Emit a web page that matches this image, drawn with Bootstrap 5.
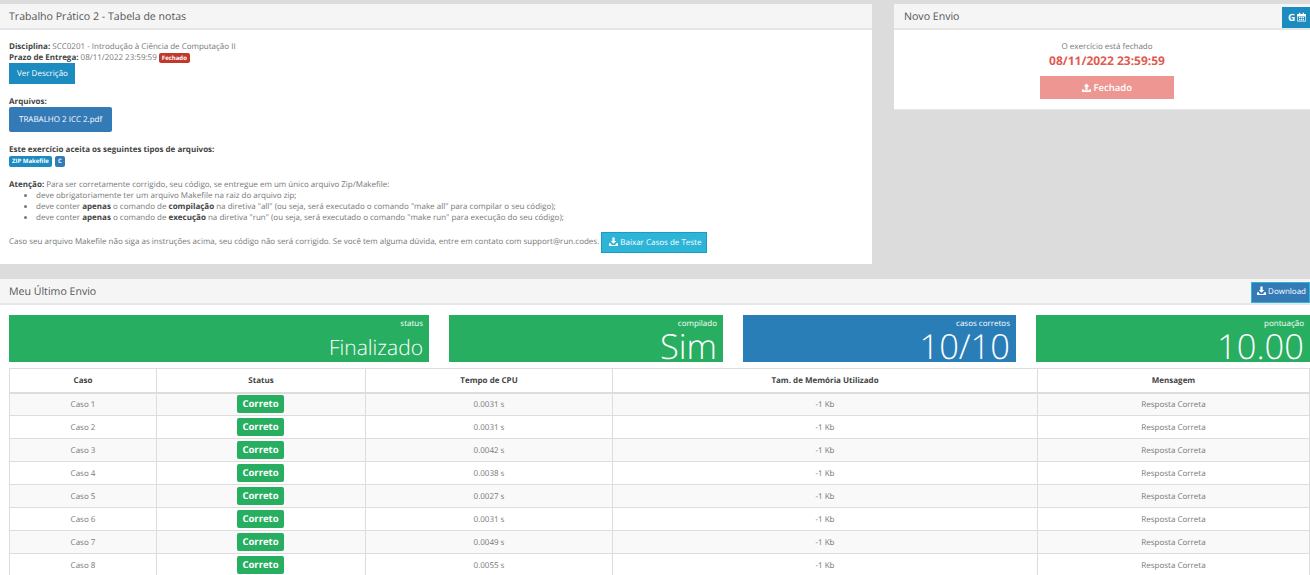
<!DOCTYPE html>
<html lang="pt-BR">
  <head>
    <meta charset="UTF-8" />
    <title>Trabalho Prático 2 - Tabela de notas</title>
    <link href="https://cdn.jsdelivr.net/npm/bootstrap@5.3.3/dist/css/bootstrap.min.css" rel="stylesheet" />
    <style>
      html, body { height: 575px; overflow: hidden; }
      body {
        background: #dcdcdc;
        font-family: "Open Sans", "Liberation Sans", sans-serif;
        font-size: 8px;
        line-height: 11.4px;
        color: #777;
        padding-top: 4px;
        text-rendering: geometricPrecision;
      }
      b, strong { color: #444; font-weight: 700; }
      .top-area { display: grid; grid-template-columns: 872px 416px; column-gap: 22px; margin-bottom: 15px; height: 260px; }
      .box { background: #fff; }
      .box-side { height: 106px; border-bottom: 1px solid #e6e6e6; }
      .box-head {
        background: #f5f5f5;
        border-bottom: 2px solid #e6e6e6;
        height: 26px;
        padding: 1px 9px 0;
        font-size: 10.6px;
        line-height: 24px;
        color: #555;
        position: relative;
      }
      .box-side .box-head { padding-left: 10px; }
      .box-body { padding: 11px 9px 0; }
      .box-side .box-body { padding-left: 19px; }
      .btn-flat {
        display: inline-block;
        color: #fff;
        border: 0;
        border-radius: 0;
        font-size: 8px;
        line-height: 12px;
        white-space: nowrap;
      }
      .btn-desc { background: #1b8bc0; padding: 5px 8px 4px; height: 21px; display: block; width: 66px; margin-top: -1px; }
      .btn-file { background: #337ab7; padding: 7px 10px; height: 25px; width: 103px; border-radius: 2px; display: block; margin-top: -1px; }
      .btn-tests { background: #2db5d8; border: 1px solid #1b9cc0; padding: 4px 7px; height: 21px; width: 106px; }
      .btn-cal { position: absolute; right: 0; top: 3px; background: #1b8bc0; height: 21px; width: 28px; padding: 4px 0 0 6px; font-weight: 700; font-size: 10px; }
      .btn-dl { position: absolute; right: 0; top: 3px; background: #337ab7; border: 1px solid #2db5d8; height: 21px; width: 59px; padding: 3px 0 0 5px; }
      .tag-red { background: #c0392b; color: #fff; font-size: 6px; font-weight: 700; padding: 1px 3px; border-radius: 2px; line-height: 8px; display: inline-block; }
      .tag-blue { background: #1b8bc0; color: #fff; font-size: 6px; font-weight: 700; padding: 2px 3px; border-radius: 2px; line-height: 7px; height: 11px; display: inline-block; }
      .tag-dark { background: #337ab7; width: 10px; }
      .type-tags { display: flex; gap: 3px; }
      .gap-a { margin-top: 12.6px; }
      .gap-b { margin-top: 12.4px; }
      .gap-c { margin-top: 8.4px; }
      .gap-d { margin-top: 12.6px; }
      .rules { margin: 0.6px 0 0; padding-left: 27px; line-height: 10.7px; }
      .close-date { color: #e05a50; font-size: 12px; font-weight: 700; line-height: 17px; }
      .btn-closed { background: #ee9792; width: 134px; height: 23px; font-weight: 600; font-size: 9.5px; padding-top: 6px; display: block; margin: 7px auto 0; }
      .stats { display: grid; grid-template-columns: 420px 274px 273px 274px; column-gap: 20px; padding: 10px 0 6px 9px; }
      .stat { height: 47px; color: #fff; text-align: right; padding: 4px 6px 0 0; }
      .stat-green { background: #27ae60; }
      .stat-blue { background: #2a7eb8; }
      .stat-label { font-size: 8px; line-height: 10px; }
      .stat-value { font-weight: 300; line-height: 33px; }
      .stat-sm { font-size: 21px; margin-top: 3px; }
      .stat-lg { font-size: 34.5px; margin-top: 1px; }
      .cases { margin: 0 0 0 9px; width: 1300px; table-layout: fixed; border-collapse: collapse; }
      .cases td, .cases th { border: 1px solid #ddd; text-align: center; padding: 1px 0 0; height: 23px; font-size: 8px; color: #777; vertical-align: middle; background: #fff; }
      .cases th { color: #444; font-weight: 700; border-bottom: 2px solid #ddd; height: 24px; padding-top: 0; }
      .cases tbody tr:nth-child(odd) td { background: #f9f9f9; }
      .ok-tag { display: inline-block; background: #27ae60; color: #fff; font-size: 9.5px; font-weight: 700; line-height: 18px; width: 47px; border-radius: 2px; vertical-align: middle; margin: -1px 1px 0 0; }
      .ico { width: 9px; height: 9px; vertical-align: -1px; fill: #fff; }
      .ico-cal { width: 11px; height: 10px; margin-left: 1px; }
      .last-line { display: flex; align-items: center; gap: 2px; }
      .last-text { margin-bottom: 2px; }
    </style>
  </head>
  <body>
    <div class="top-area">
      <div class="box">
        <div class="box-head">Trabalho Prático 2 - Tabela de notas</div>
        <div class="box-body">
          <div><b>Disciplina:</b> SCC0201 - Introdução à Ciência de Computação II</div>
          <div><b>Prazo de Entrega:</b> 08/11/2022 23:59:59 <span class="tag-red">Fechado</span></div>
          <span class="btn-flat btn-desc">Ver Descrição</span>
          <div class="gap-a"><b>Arquivos:</b></div>
          <span class="btn-flat btn-file">TRABALHO 2 ICC 2.pdf</span>
          <div class="gap-d"><b>Este exercício aceita os seguintes tipos de arquivos:</b></div>
          <div class="type-tags"><span class="tag-blue">ZIP Makefile</span><span class="tag-blue tag-dark">C</span></div>
          <div class="gap-b"><b>Atenção:</b> Para ser corretamente corrigido, seu código, se entregue em um único arquivo Zip/Makefile:</div>
          <ul class="rules">
            <li>deve obrigatoriamente ter um arquivo Makefile na raiz do arquivo zip;</li>
            <li>deve conter <b>apenas</b> o comando de <b>compilação</b> na diretiva "all" (ou seja, será executado o comando "make all" para compilar o seu código);</li>
            <li>deve conter <b>apenas</b> o comando de <b>execução</b> na diretiva "run" (ou seja, será executado o comando "make run" para execução do seu código);</li>
          </ul>
          <div class="last-line gap-c">
            <span class="last-text">Caso seu arquivo Makefile não siga as instruções acima, seu código não será corrigido. Se você tem alguma dúvida, entre em contato com support@run.codes.</span>
            <span class="btn-flat btn-tests"><svg class="ico" viewBox="0 0 16 16"><path d="M6 1h4v6h3L8 12 3 7h3zM0 11h3l2 3h6l2-3h3v5H0z"/></svg> Baixar Casos de Teste</span>
          </div>
        </div>
      </div>
      <div class="box box-side">
        <div class="box-head">Novo Envio
          <span class="btn-flat btn-cal">G<svg class="ico ico-cal" viewBox="0 0 16 16"><path d="M1 3h3V1h2v2h4V1h2v2h3v12H1zm1 4v7h12V7zm2 1h2v2H4zm3 0h2v2H7zm3 0h2v2h-2zm-6 3h2v2H4zm3 0h2v2H7zm3 0h2v2h-2z" fill-rule="evenodd"/></svg></span>
        </div>
        <div class="box-body text-center">
          <div>O exercício está fechado</div>
          <div class="close-date">08/11/2022 23:59:59</div>
          <span class="btn-flat btn-closed"><svg class="ico" viewBox="0 0 16 16"><path d="M6 12h4V6h3L8 1 3 6h3zM0 11h3v2h10v-2h3v5H0z"/></svg> Fechado</span>
        </div>
      </div>
    </div>
    <div class="box">
      <div class="box-head">Meu Último Envio
        <span class="btn-flat btn-dl"><svg class="ico" viewBox="0 0 16 16"><path d="M6 1h4v6h3L8 12 3 7h3zM0 11h3l2 3h6l2-3h3v5H0z"/></svg> Download</span>
      </div>
      <div class="stats">
        <div class="stat stat-green"><div class="stat-label">status</div><div class="stat-value stat-sm">Finalizado</div></div>
        <div class="stat stat-green"><div class="stat-label">compilado</div><div class="stat-value stat-lg">Sim</div></div>
        <div class="stat stat-blue"><div class="stat-label">casos corretos</div><div class="stat-value stat-lg">10/10</div></div>
        <div class="stat stat-green"><div class="stat-label">pontuação</div><div class="stat-value stat-lg">10.00</div></div>
      </div>
      <table class="cases">
        <colgroup><col style="width:147px"><col style="width:209px"><col style="width:247px"><col style="width:425px"><col style="width:272px"></colgroup>
        <thead><tr><th>Caso</th><th>Status</th><th>Tempo de CPU</th><th>Tam. de Memória Utilizado</th><th>Mensagem</th></tr></thead>
        <tbody id="caseRows"></tbody>
      </table>
    </div>
    <script>
      const times = ["0.0031", "0.0031", "0.0042", "0.0038", "0.0027", "0.0031", "0.0049", "0.0055"];
      document.getElementById("caseRows").innerHTML = times.map((t, i) => `
        <tr><td>Caso ${i + 1}</td><td><span class="ok-tag">Correto</span></td><td>${t} s</td><td>-1 Kb</td><td>Resposta Correta</td></tr>`).join("");
    </script>
    <script src="https://cdn.jsdelivr.net/npm/bootstrap@5.3.3/dist/js/bootstrap.bundle.min.js"></script>
  </body>
</html>
